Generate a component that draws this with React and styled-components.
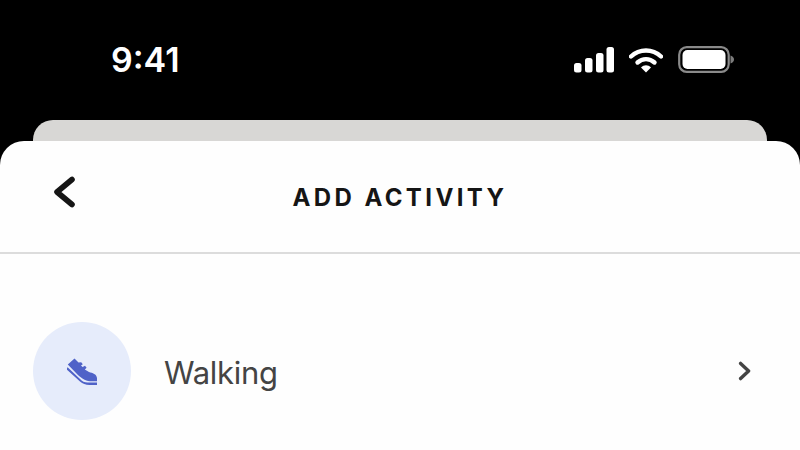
import React from 'react'
import styled, {createGlobalStyle} from 'styled-components'

const GlobalStyle = createGlobalStyle`
    html, body {
        margin: 0;
        padding: 0;
        background: #000;
    }
    * {
        box-sizing: border-box;
    }
`

const Page = styled.div`
    width: 800px;
    height: 450px;
    overflow: hidden;
    background: #000;
    font-family: Inter, "Liberation Sans", sans-serif;
`

const StatusBar = styled.div`
    height: 120px;
    padding: 42px 65px 0 111px;
    display: flex;
    justify-content: space-between;
    align-items: flex-start;
`

const Time = styled.div`
    color: #fff;
    font-size: 34px;
    line-height: 36px;
    font-weight: 600;
`

const StatusIcons = styled.div`
    display: flex;
    align-items: center;
    margin-top: 4px;
`

const BackCard = styled.div`
    height: 21px;
    margin: 0 33px;
    background: #d8d7d5;
    border-radius: 20px 20px 0 0;
`

const Sheet = styled.div`
    height: 309px;
    background: #fefefe;
    border-radius: 24px 24px 0 0;
`

const Header = styled.div`
    position: relative;
    height: 113px;
    padding-top: 2px;
    display: flex;
    align-items: center;
    justify-content: center;
    border-bottom: 2px solid #dcdcdc;
`

const BackButton = styled.button`
    position: absolute;
    left: 49px;
    top: 33px;
    padding: 0;
    border: none;
    background: none;
    display: flex;
`

const Title = styled.h1`
    margin: 0;
    color: #151515;
    font-size: 24px;
    line-height: 28px;
    font-weight: 700;
    letter-spacing: 3.4px;
`

const Row = styled.div`
    margin-top: 68px;
    padding: 0 48px 0 33px;
    display: flex;
    align-items: center;
`

const IconCircle = styled.div`
    width: 98px;
    height: 98px;
    border-radius: 50%;
    background: #e6ecfb;
    display: flex;
    align-items: center;
    justify-content: center;
`

const Label = styled.div`
    flex: 1;
    margin-left: 33px;
    padding-top: 3px;
    color: #444;
    font-size: 31px;
    line-height: 40px;
    font-weight: 400;
    letter-spacing: -0.3px;
`

const Signal = () => (
    <svg width="41" height="26" viewBox="0 0 41 26" fill="#fff">
        <rect x="0" y="16" width="7.5" height="9.5" rx="2.5" />
        <rect x="11" y="11" width="7.5" height="14.5" rx="2.5" />
        <rect x="22" y="6" width="7.5" height="19.5" rx="2.5" />
        <rect x="32.5" y="0" width="7.5" height="25.5" rx="2.5" />
    </svg>
)

const Wifi = () => (
    <svg width="34" height="26" viewBox="0 0 34 26" fill="none" style={{marginLeft: 14}}>
        <path d="M2 9.5C10.5 1.5 23.5 1.5 32 9.5" stroke="#fff" strokeWidth="4.4" strokeLinecap="round" />
        <path d="M8.5 15.5C13.5 11 20.5 11 25.5 15.5" stroke="#fff" strokeWidth="4.4" strokeLinecap="round" />
        <path d="M12 20.4C15 17.6 19 17.6 22 20.4L17 25.5Z" fill="#fff" />
    </svg>
)

const Battery = () => (
    <svg width="57" height="28" viewBox="0 0 57 28" fill="none" style={{marginLeft: 15}}>
        <rect x="1.2" y="1.2" width="49.5" height="24.6" rx="7.5" stroke="#8a8a8a" strokeWidth="2.2" />
        <rect x="4.5" y="4" width="43" height="19" rx="5" fill="#fff" />
        <path d="M52.5 9.5C55 10.3 56 11.8 56 13.5C56 15.2 55 16.7 52.5 17.5Z" fill="#7c7c7c" />
    </svg>
)

const BackIcon = () => (
    <svg width="30" height="36" viewBox="0 0 30 36" fill="none">
        <path d="M23 5.5L8 18L23 30.5" stroke="#151515" strokeWidth="5.6" strokeLinecap="round" strokeLinejoin="round" />
    </svg>
)

const ShoeIcon = () => (
    <svg width="30" height="27" viewBox="0 0 30 27" fill="#4f62c8">
        <path d="M0.8 6.6L7.5 0.4L11.5 4.6L14.2 4.2L15.8 6.2L14 7.6L15.6 9L18 7.8L19.6 9.8L17.8 11.4L22 14C25.5 15 29.6 16 30 20C30.2 21.6 30 23.2 30 23.2H23C18 23 13.5 19.6 9 15Z" />
        <path d="M0.6 9.2L14.6 22.4C17 24.4 19.8 24.6 22.5 24.6H30V27H22.5C18.6 27 15.6 26 13 23.6L0 11.8C-0.2 10.8 0 10 0.6 9.2Z" />
    </svg>
)

const RowChevron = () => (
    <svg width="14" height="20" viewBox="0 0 14 20" fill="none">
        <path d="M2.6 2.4L10.6 10L2.6 17.6" stroke="#444" strokeWidth="3.4" strokeLinecap="round" strokeLinejoin="round" />
    </svg>
)

const App = () => {
    return (
        <>
        <GlobalStyle />
        <Page>
            <StatusBar>
                <Time>9:41</Time>
                <StatusIcons>
                    <Signal />
                    <Wifi />
                    <Battery />
                </StatusIcons>
            </StatusBar>
            <BackCard />
            <Sheet>
                <Header>
                    <BackButton><BackIcon /></BackButton>
                    <Title>ADD ACTIVITY</Title>
                </Header>
                <Row>
                    <IconCircle><ShoeIcon /></IconCircle>
                    <Label>Walking</Label>
                    <RowChevron />
                </Row>
            </Sheet>
        </Page>
        </>
    )
}

export default App
